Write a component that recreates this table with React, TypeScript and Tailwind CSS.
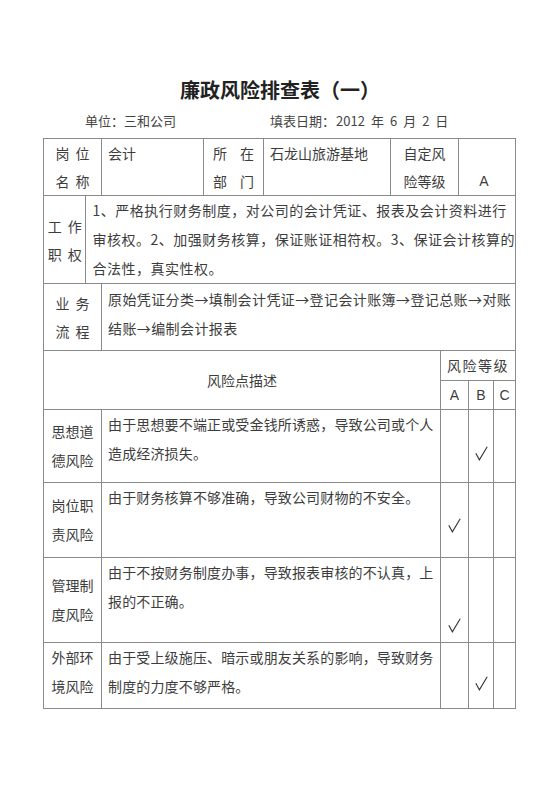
import React from "react";

const B = "border-[#8a8a8a]";

function Pair({ a, b, gap }: { a: string; b: string; gap: string }) {
  return (
    <div className={`flex justify-center ${gap}`}>
      <span>{a}</span>
      <span>{b}</span>
    </div>
  );
}

type Risk = {
  label: [string, string];
  lines: string[];
  col: 0 | 1 | 2;
  checkTop: string;
  h: string;
  labelTop?: boolean;
  last?: boolean;
};

const risks: Risk[] = [
  {
    label: ["思想道", "德风险"],
    lines: ["由于思想要不端正或受金钱所诱惑，导致公司或个人", "造成经济损失。"],
    col: 1,
    checkTop: "pt-[36px]",
    h: "h-[73px]",
  },
  {
    label: ["岗位职", "责风险"],
    lines: ["由于财务核算不够准确，导致公司财物的不安全。"],
    col: 0,
    checkTop: "pt-[35px]",
    h: "h-[75px]",
  },
  {
    label: ["管理制", "度风险"],
    lines: ["由于不按财务制度办事，导致报表审核的不认真，上", "报的不正确。"],
    col: 0,
    checkTop: "pt-[60px]",
    h: "h-[85px]",
  },
  {
    label: ["外部环", "境风险"],
    lines: ["由于受上级施压、暗示或朋友关系的影响，导致财务", "制度的力度不够严格。"],
    col: 1,
    checkTop: "pt-[33px]",
    h: "h-[65px]",
    labelTop: true,
    last: true,
  },
];

function Check() {
  return (
    <svg width="13" height="15" viewBox="0 0 13 15" className="block">
      <path d="M0.8 7.2 L4.4 13.8 L12.2 0.8" fill="none" stroke="#333" strokeWidth="1.1" strokeLinejoin="miter" />
    </svg>
  );
}

export default function App() {
  return (
    <div className="w-[560px] h-[792px] bg-white text-[#3d3d3d] font-['Noto_Sans_CJK_SC',sans-serif] text-[14px]">
      <div className="pt-[76px] text-center text-[20px] leading-[28px] font-bold text-[#222]">
        廉政风险排查表（一）
      </div>
      <div className="mt-[7px] flex pl-[85px] text-[13px] leading-[20px] text-[#444] whitespace-nowrap">
        <span className="w-[185px]">单位：三和公司</span>
        <span>填表日期：</span>
        <span className="ml-[1px]">2012</span>
        <span className="ml-[6px]">年</span>
        <span className="ml-[6px]">6</span>
        <span className="ml-[6px]">月</span>
        <span className="ml-[6px]">2</span>
        <span className="ml-[6px]">日</span>
      </div>

      <div className={`mt-[7px] ml-[43px] w-[473px] border ${B} whitespace-nowrap`}>
        {/* Row 1 */}
        <div className={`flex h-[57px] border-b ${B} leading-[28px]`}>
          <div className={`w-[58px] border-r ${B} flex flex-col`}>
            <Pair a="岗" b="位" gap="gap-[6px]" />
            <Pair a="名" b="称" gap="gap-[6px]" />
          </div>
          <div className={`w-[102px] border-r ${B} pl-[6px]`}>会计</div>
          <div className={`w-[60px] border-r ${B} flex flex-col`}>
            <Pair a="所" b="在" gap="gap-[13px]" />
            <Pair a="部" b="门" gap="gap-[13px]" />
          </div>
          <div className={`w-[127px] border-r ${B} pl-[6px]`}>石龙山旅游基地</div>
          <div className={`w-[68px] border-r ${B} flex flex-col items-center`}>
            <span>自定风</span>
            <span>险等级</span>
          </div>
          <div className="flex-1 pt-[28px] pr-[6px] text-center font-['Liberation_Sans',sans-serif] text-[14px]">A</div>
        </div>

        {/* Row 2 */}
        <div className={`flex h-[88px] border-b ${B}`}>
          <div className={`w-[58px] border-r ${B} flex flex-col justify-center leading-[28px]`}>
            <Pair a="工" b="作" gap="gap-[6px]" />
            <Pair a="职" b="权" gap="gap-[6px]" />
          </div>
          <div className="flex-1 pl-[6px] leading-[29px] tracking-[0.5px]">
            <div>1、严格执行财务制度，对公司的会计凭证、报表及会计资料进行</div>
            <div>审核权。2、加强财务核算，保证账证相符权。3、保证会计核算的</div>
            <div>合法性，真实性权。</div>
          </div>
        </div>

        {/* Row 3 */}
        <div className={`flex h-[67px] border-b ${B}`}>
          <div className={`w-[58px] border-r ${B} flex flex-col justify-center leading-[28px]`}>
            <Pair a="业" b="务" gap="gap-[6px]" />
            <Pair a="流" b="程" gap="gap-[6px]" />
          </div>
          <div className="flex-1 pl-[6px] pt-[1px] leading-[29px] tracking-[0.4px]">
            <div>原始凭证分类→填制会计凭证→登记会计账簿→登记总账→对账</div>
            <div>结账→编制会计报表</div>
          </div>
        </div>

        {/* Header */}
        <div className={`flex h-[59px] border-b ${B}`}>
          <div className={`w-[397px] border-r ${B} flex items-center justify-center`}>风险点描述</div>
          <div className="flex-1 flex flex-col">
            <div className={`h-[30px] border-b ${B} flex items-center justify-center tracking-[1.5px]`}>风险等级</div>
            <div className="flex-1 flex font-['Liberation_Sans',sans-serif]">
              <div className={`w-[28px] border-r ${B} flex items-center justify-center`}>A</div>
              <div className={`w-[25px] border-r ${B} flex items-center justify-center`}>B</div>
              <div className="flex-1 flex items-center justify-center">C</div>
            </div>
          </div>
        </div>

        {risks.map((r, i) => (
          <div key={i} className={`flex ${r.h} ${r.last ? "" : `border-b ${B}`}`}>
            <div
              className={`w-[58px] border-r ${B} flex flex-col items-center leading-[29px] ${
                r.labelTop ? "pt-[0px]" : "justify-center"
              }`}
            >
              <span>{r.label[0]}</span>
              <span>{r.label[1]}</span>
            </div>
            <div className={`w-[339px] border-r ${B} pl-[6px] leading-[29px] tracking-[0.15px]`}>
              {r.lines.map((l, j) => (
                <div key={j}>{l}</div>
              ))}
            </div>
            <div className={`w-[28px] border-r ${B} flex justify-center ${r.checkTop}`}>
              {r.col === 0 ? <Check /> : null}
            </div>
            <div className={`w-[25px] border-r ${B} flex justify-center ${r.checkTop}`}>
              {r.col === 1 ? <Check /> : null}
            </div>
            <div className="flex-1" />
          </div>
        ))}
      </div>
    </div>
  );
}
